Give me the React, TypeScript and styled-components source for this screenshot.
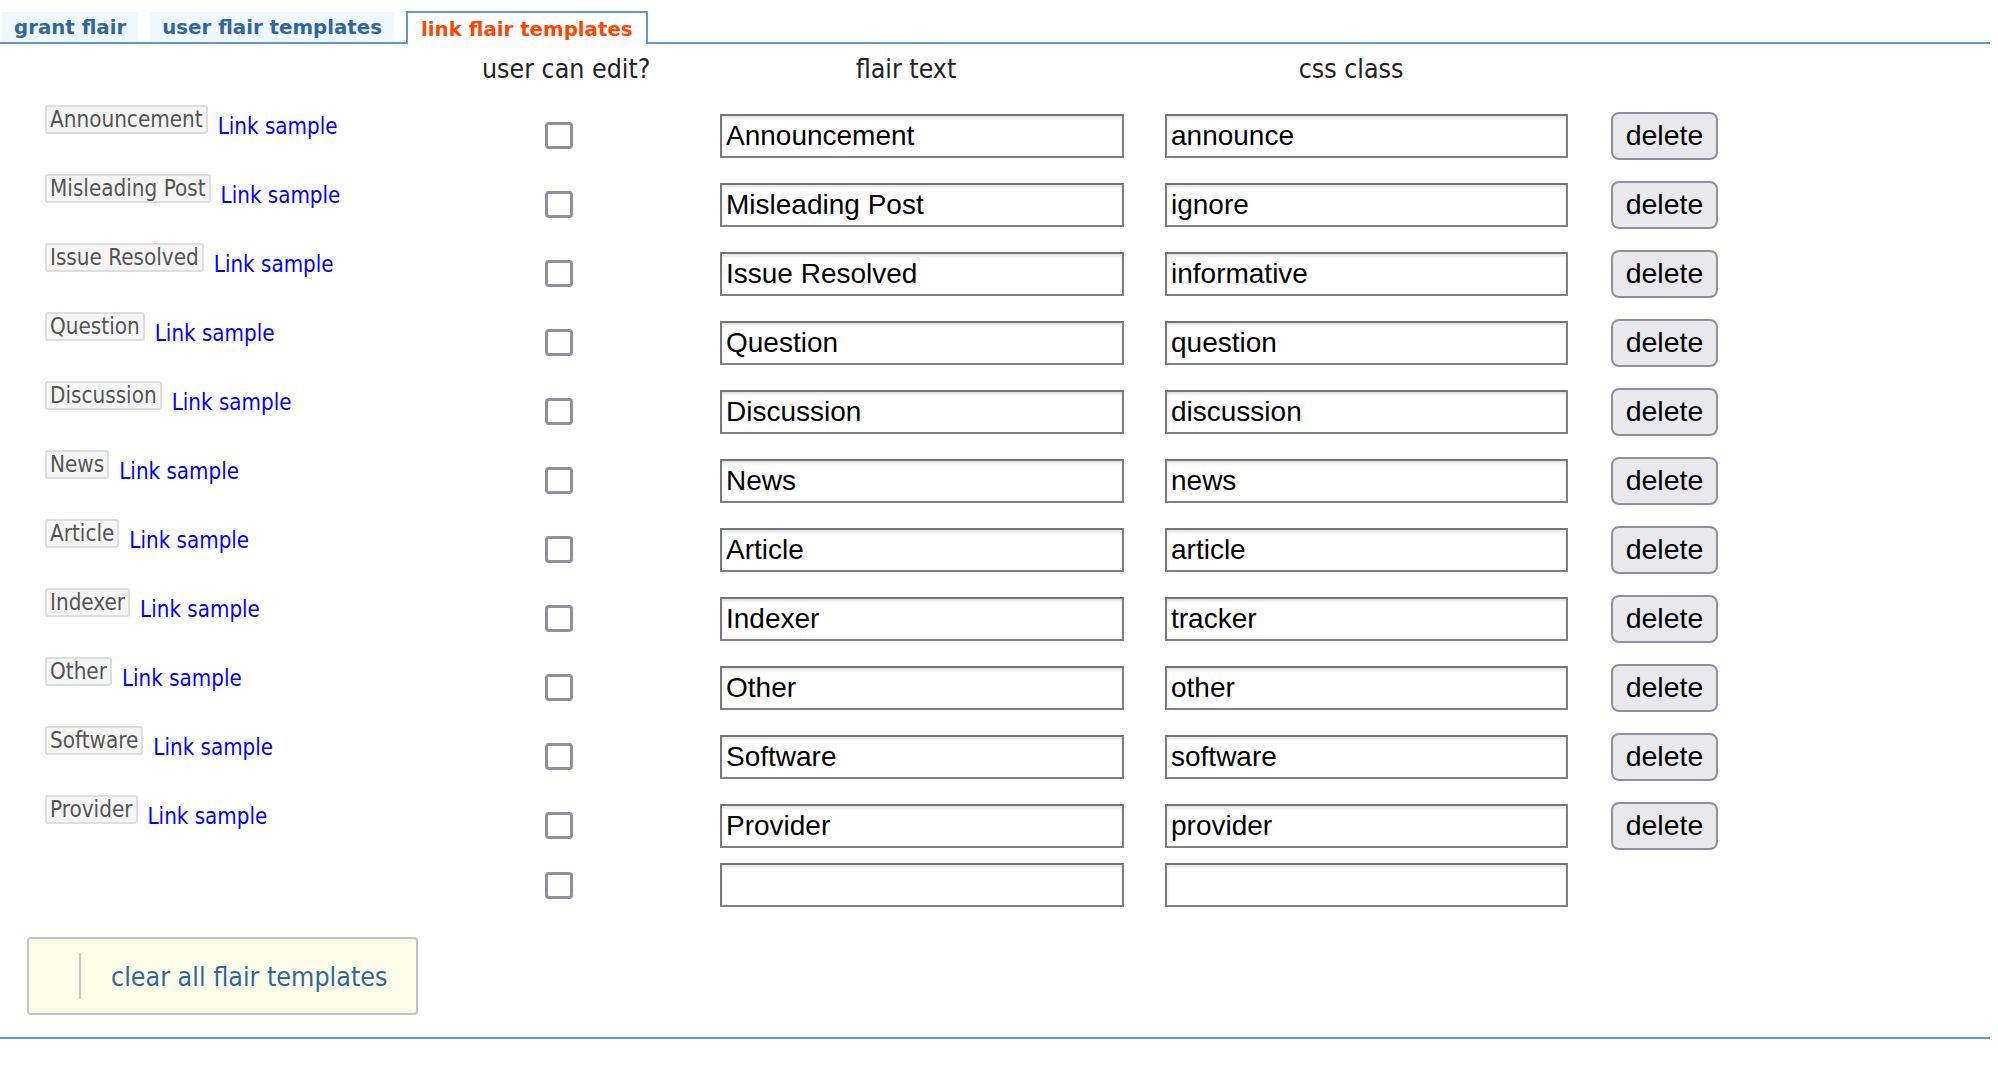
import React from "react";
import styled, { createGlobalStyle } from "styled-components";

const GlobalStyle = createGlobalStyle`
  html, body { margin: 0; padding: 0; background: #ffffff; }
  body {
    font-family: "DejaVu Sans Condensed", "DejaVu Sans", sans-serif;
    font-stretch: condensed;
    color: #222;
  }
`;

const Page = styled.div`
  width: 1990px;
  background: #fff;
`;

const TabBar = styled.div`
  display: flex;
  align-items: flex-end;
  gap: 12px;
  height: 30px;
  padding: 12px 0 0 2px;
  border-bottom: 2px solid #5f99cf;
`;

const Tab = styled.div<{ $active?: boolean }>`
  font-family: "DejaVu Sans", sans-serif;
  font-stretch: normal;
  font-weight: bold;
  font-size: 19.8px;
  white-space: nowrap;
  ${(p) =>
    p.$active
      ? `
    height: 31px;
    line-height: 33px;
    padding: 0 13px;
    border: 2px solid #5f99cf;
    border-bottom: none;
    margin-bottom: -2px;
    background: #ffffff;
    color: #ff4500;
  `
      : `
    height: 30px;
    line-height: 32px;
    padding: 0 12px;
    background: #eff7ff;
    color: #336699;
  `}
`;

const Section = styled.div`
  padding-bottom: 22px;
  border-bottom: 2px solid #5f99cf;
`;

const Table = styled.div`
  padding-left: 45px;
`;

const Row = styled.div<{ $h: number; $head?: boolean }>`
  display: grid;
  grid-template-columns: 437px 168px 474px 444px 150px;
  height: ${(p) => p.$h}px;
  box-sizing: border-box;
  align-items: ${(p) => (p.$head ? "start" : "center")};
  padding-top: ${(p) => (p.$head ? 10 : 0)}px;
`;

const HeadCell = styled.div<{ $pad?: number }>`
  padding-left: ${(p) => p.$pad ?? 0}px;
  text-align: center;
  font-size: 26.5px;
  line-height: 30px;
  color: #222;
  white-space: nowrap;
`;

const LabelCell = styled.div`
  align-self: start;
  padding-top: 5px;
  display: flex;
  align-items: flex-start;
`;

const FlairLabel = styled.span`
  font-size: 22.3px;
  line-height: 25px;
  color: #555;
  background: #f5f5f5;
  border: 2px solid #dedede;
  border-radius: 3px;
  padding: 0 3px;
  white-space: nowrap;
`;

const LinkSample = styled.a`
  font-size: 22.2px;
  line-height: 25px;
  color: #0000ff;
  text-decoration: none;
  margin-left: 10px;
  margin-top: 9px;
  white-space: nowrap;
  cursor: pointer;
`;

const CheckCell = styled.div`
  display: flex;
  justify-content: center;
`;

const Check = styled.input`
  appearance: none;
  -webkit-appearance: none;
  box-sizing: border-box;
  width: 28px;
  height: 27px;
  margin: 2px 14px 0 0;
  border: 3px solid #8f8f9d;
  border-radius: 4px;
  background: #fff;
`;

const FieldCell = styled.div<{ $pad: number }>`
  padding-left: ${(p) => p.$pad}px;
  display: flex;
  justify-content: flex-end;
`;

const TextField = styled.input<{ $w: number }>`
  box-sizing: border-box;
  width: ${(p) => p.$w}px;
  height: 44px;
  margin: 2px 0 0 0;
  padding: 0 4px;
  border: 2px solid #808080;
  border-top-color: #747474;
  border-left-color: #7a7a7a;
  box-shadow: inset 0 2px 3px rgba(0, 0, 0, 0.12);
  font-family: "Liberation Sans", Arial, sans-serif;
  font-stretch: normal;
  font-size: 28px;
  color: #000;
  background: #fff;
  outline: none;
`;

const ButtonCell = styled.div`
  padding-left: 43px;
  display: flex;
`;

const DeleteButton = styled.button`
  box-sizing: border-box;
  width: 110px;
  height: 48px;
  margin: 2px 0 0 0;
  padding: 0;
  border: 2px solid #8f8f9d;
  border-radius: 8px;
  background: #e9e9ed;
  font-family: "Liberation Sans", Arial, sans-serif;
  font-stretch: normal;
  font-size: 28.5px;
  color: #000;
  cursor: pointer;
`;

const ClearButton = styled.div`
  box-sizing: border-box;
  width: 391px;
  height: 78px;
  margin: 28px 0 0 27px;
  padding-left: 50px;
  display: flex;
  align-items: center;
  border: 2px solid #c4c4c4;
  border-radius: 4px;
  background: #fdfee9;
  cursor: pointer;
`;

const Separator = styled.span`
  width: 2px;
  height: 46px;
  background: #cacaca;
  margin-right: 30px;
`;

const ClearText = styled.span`
  font-size: 26.6px;
  color: #336699;
  white-space: nowrap;
`;

type Flair = { text: string; css: string };

const flairs: Flair[] = [
  { text: "Announcement", css: "announce" },
  { text: "Misleading Post", css: "ignore" },
  { text: "Issue Resolved", css: "informative" },
  { text: "Question", css: "question" },
  { text: "Discussion", css: "discussion" },
  { text: "News", css: "news" },
  { text: "Article", css: "article" },
  { text: "Indexer", css: "tracker" },
  { text: "Other", css: "other" },
  { text: "Software", css: "software" },
  { text: "Provider", css: "provider" },
];

export default function App() {
  return (
    <Page>
      <GlobalStyle />
      <TabBar>
        <Tab>grant flair</Tab>
        <Tab>user flair templates</Tab>
        <Tab $active>link flair templates</Tab>
      </TabBar>
      <Section>
        <Table>
          <Row $h={56} $head>
            <div />
            <HeadCell>user can edit?</HeadCell>
            <HeadCell $pad={38}>flair text</HeadCell>
            <HeadCell $pad={10}>css class</HeadCell>
            <div />
          </Row>
          {flairs.map((f) => (
            <Row $h={69} key={f.text}>
              <LabelCell>
                <FlairLabel>{f.text}</FlairLabel>
                <LinkSample>Link sample</LinkSample>
              </LabelCell>
              <CheckCell>
                <Check type="checkbox" />
              </CheckCell>
              <FieldCell $pad={38}>
                <TextField $w={404} defaultValue={f.text} />
              </FieldCell>
              <FieldCell $pad={10}>
                <TextField $w={403} defaultValue={f.css} />
              </FieldCell>
              <ButtonCell>
                <DeleteButton>delete</DeleteButton>
              </ButtonCell>
            </Row>
          ))}
          <Row $h={50}>
            <div />
            <CheckCell>
              <Check type="checkbox" />
            </CheckCell>
            <FieldCell $pad={38}>
              <TextField $w={404} defaultValue="" />
            </FieldCell>
            <FieldCell $pad={10}>
              <TextField $w={403} defaultValue="" />
            </FieldCell>
            <div />
          </Row>
        </Table>
        <ClearButton>
          <Separator />
          <ClearText>clear all flair templates</ClearText>
        </ClearButton>
      </Section>
    </Page>
  );
}
